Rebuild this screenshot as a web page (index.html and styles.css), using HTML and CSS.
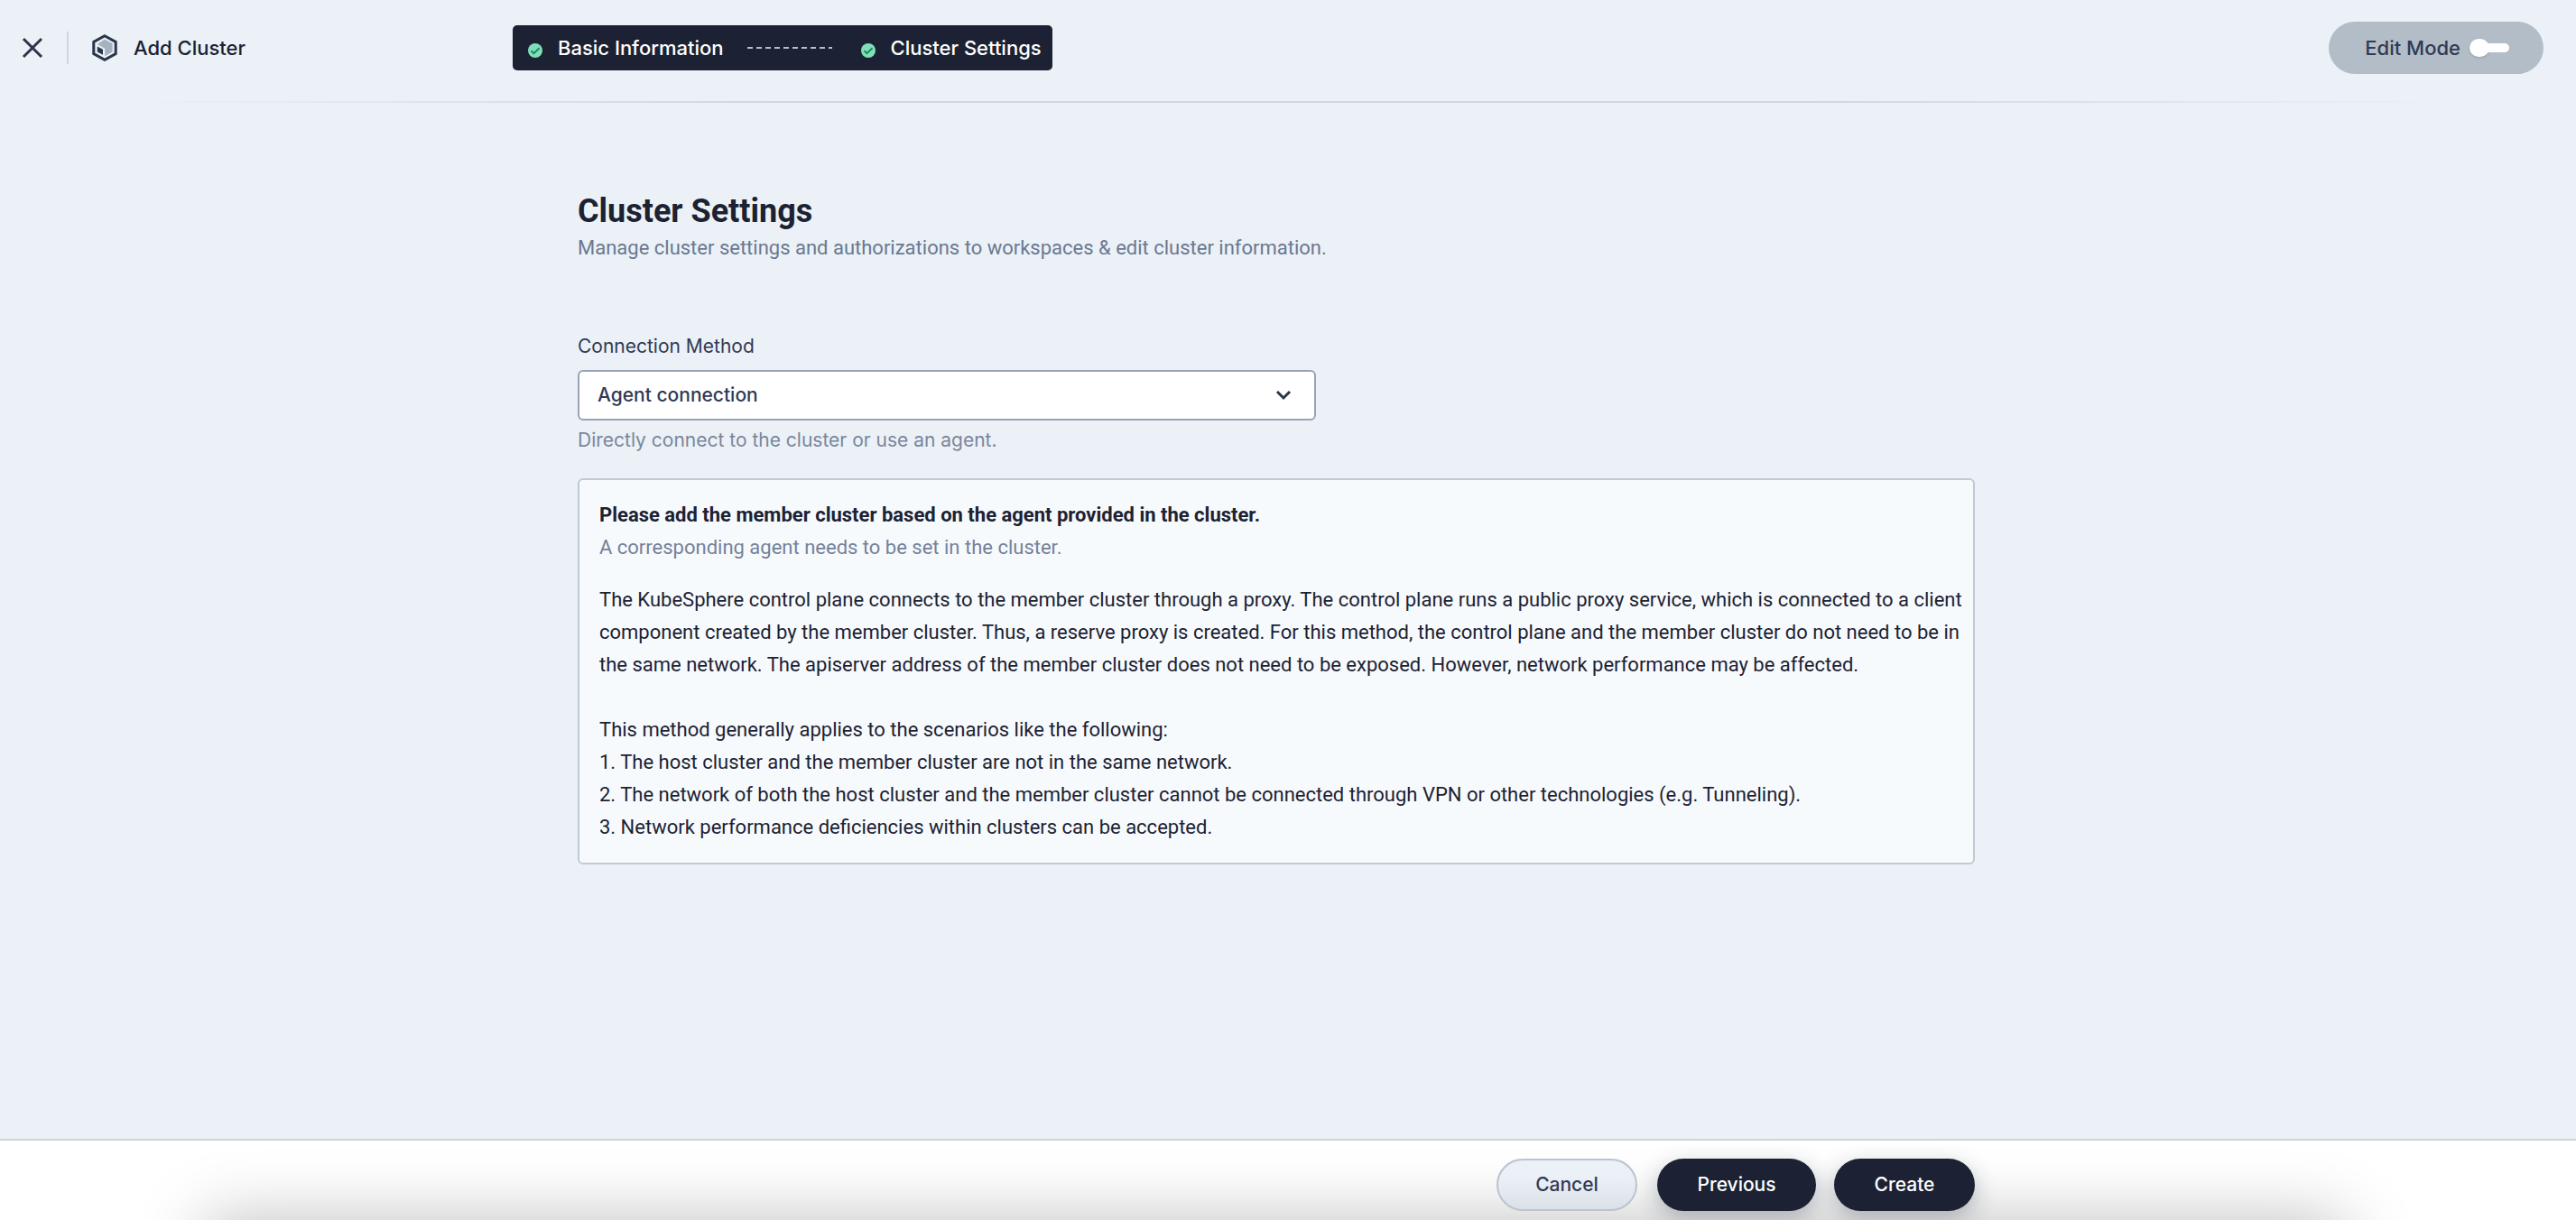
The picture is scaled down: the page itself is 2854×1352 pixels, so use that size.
FILE: index.html
```html
<!DOCTYPE html>
<html lang="en">
<head>
<meta charset="utf-8">
<meta name="viewport" content="width=device-width, initial-scale=1">
<title>Add Cluster</title>
<link rel="stylesheet" href="styles.css">
</head>
<body class="page">
  <header class="header">
    <div class="brand">
      <button class="close" type="button" aria-label="Close">
        <svg width="24" height="24" viewBox="0 0 24 24" fill="none" stroke="#2a3649" stroke-width="3"><path d="M2 2l20 20M22 2L2 22"/></svg>
      </button>
      <span class="divider"></span>
      <svg class="logo" width="28" height="30" viewBox="0 0 28 30">
        <path d="M14 1.700L26.200 8.500v13L14 28.300 1.800 21.500v-13z" fill="none" stroke="#2a3649" stroke-width="3"/>
        <path d="M14 5.600L22.600 10.200v9.400L14.200 24.300v-8.500L5.800 11z" fill="#a5b2c0"/>
        <path d="M5.800 13.600l6.200 3.200v6L5.800 19.400z" fill="#2a3649"/>
      </svg>
      <span class="brand-name">Add Cluster</span>
    </div>
    <nav class="steps" aria-label="Steps">
      <svg class="check" width="16" height="16" viewBox="0 0 16 16"><circle cx="8" cy="8" r="8" fill="#7fdfb8"/><path d="M3.500 8.200l3 3 6-6" fill="none" stroke="#1c8a5e" stroke-width="2"/></svg>
      <span>Basic Information</span>
      <span class="dash"></span>
      <svg class="check" width="16" height="16" viewBox="0 0 16 16"><circle cx="8" cy="8" r="8" fill="#7fdfb8"/><path d="M3.500 8.200l3 3 6-6" fill="none" stroke="#1c8a5e" stroke-width="2"/></svg>
      <span>Cluster Settings</span>
    </nav>
    <label class="mode">Edit Mode
      <input class="toggle" type="checkbox">
    </label>
  </header>

  <main class="main">
    <h1 class="title">Cluster Settings</h1>
    <p class="subtitle">Manage cluster settings and authorizations to workspaces &amp; edit cluster information.</p>

    <div class="field">
      <label class="field-label" for="method">Connection Method</label>
      <div class="select-wrap">
        <select class="select" id="method" aria-describedby="method-help"><option>Agent connection</option></select>
        <svg class="chevron" width="18" height="12" viewBox="0 0 18 12" fill="none" stroke="#2a3649" stroke-width="3"><path d="M2 2l7 7 7-7"/></svg>
      </div>
      <p class="help" id="method-help">Directly connect to the cluster or use an agent.</p>
    </div>

    <section class="notice">
      <h2 class="notice-title">Please add the member cluster based on the agent provided in the cluster.</h2>
      <p class="notice-sub">A corresponding agent needs to be set in the cluster.</p>
      <p class="notice-text">The KubeSphere control plane connects to the member cluster through a proxy. The control plane runs a public proxy service, which is connected to a client component created by the member cluster. Thus, a reserve proxy is created. For this method, the control plane and the member cluster do not need to be in the same network. The apiserver address of the member cluster does not need to be exposed. However, network performance may be affected.</p>
      <p>This method generally applies to the scenarios like the following:</p>
      <ol class="scenarios">
        <li>1. The host cluster and the member cluster are not in the same network.</li>
        <li>2. The network of both the host cluster and the member cluster cannot be connected through VPN or other technologies (e.g. Tunneling).</li>
        <li>3. Network performance deficiencies within clusters can be accepted.</li>
      </ol>
    </section>
  </main>

  <footer class="footer">
    <div class="actions">
      <button class="btn btn-light" type="button">Cancel</button>
      <button class="btn btn-dark btn-wide" type="button">Previous</button>
      <button class="btn btn-dark" type="button">Create</button>
    </div>
  </footer>
</body>
</html>
```
FILE: styles.css
```css
* {
  box-sizing: border-box;
}

.page {
  display: flex;
  flex-direction: column;
  min-height: 100vh;
  margin: 0;
  background: #ebf1f7;
  color: #1c2233;
  font: 400 22px/36px Roboto, "Liberation Sans", sans-serif;
}

p,
h1,
h2,
ol {
  margin: 0;
  padding: 0;
}

/* Header */
.header {
  display: grid;
  grid-template-columns: 544px auto 1fr;
  align-items: center;
  height: 114px;
  padding: 0 36px 8px 24px;
  background: linear-gradient(90deg, transparent 5%, #d0d7e1 30%, #d0d7e1 70%, transparent 95%) bottom / 100% 2px no-repeat;
  font-family: Inter, "Liberation Sans", sans-serif;
  font-weight: 500;
}

.brand {
  display: flex;
  align-items: center;
}

.close {
  display: flex;
  padding: 0;
  border: 0;
  background: none;
}

.divider {
  width: 2px;
  height: 36px;
  margin: 0 26px;
  background: #d0d6e0;
}

.brand-name {
  margin-left: 18px;
}

.steps {
  display: flex;
  align-items: center;
  height: 50px;
  padding: 0 12px 0 17px;
  border-radius: 5px;
  background: #1c2233;
  color: #fff;
}

.check {
  margin: 6px 17px 0 0;
}

.dash {
  width: 94px;
  height: 2px;
  margin: 0 32px 0 26px;
  background: repeating-linear-gradient(90deg, #b6bec9 0 6px, transparent 6px 10px);
}

.mode {
  display: flex;
  align-items: center;
  justify-self: end;
  gap: 10px;
  height: 58px;
  padding: 0 38px 0 40px;
  border-radius: 29px;
  background: #b2bdc7;
  color: #303a55;
}

.toggle {
  display: flex;
  align-items: center;
  width: 44px;
  height: 22px;
  margin: 0;
  appearance: none;
}

.toggle::before {
  content: "";
  width: 22px;
  height: 20px;
  border-radius: 10px;
  background: #fff;
  box-shadow: 0 1px 3px rgba(36, 46, 66, 0.2);
}

.toggle::after {
  content: "";
  flex: 1;
  height: 10px;
  margin-left: -4px;
  border-radius: 0 5px 5px 0;
  background: #fff;
}

/* Form */
.main {
  flex: 1;
  width: 100%;
  max-width: 2188px;
  padding: 98px 0 40px 640px;
}

.title {
  font-size: 36px;
  line-height: 45px;
  font-weight: 700;
}

.subtitle {
  color: #6a7891;
}

.field {
  display: flex;
  flex-direction: column;
  margin-top: 73px;
  font-family: Inter, "Liberation Sans", sans-serif;
  font-size: 21px;
}

.field-label {
  margin-bottom: 8px;
  color: #303a55;
}

.select-wrap {
  position: relative;
  width: 100%;
  max-width: 818px;
}

.select {
  display: block;
  width: 100%;
  height: 56px;
  padding: 0 20px;
  appearance: none;
  border: 2px solid #98a4b4;
  border-radius: 6px;
  background: #fff;
  color: #303a55;
  font: inherit;
  font-weight: 500;
}

.chevron {
  position: absolute;
  top: 22px;
  right: 27px;
  pointer-events: none;
}

.help {
  margin-top: 4px;
  color: #7a869b;
}

.notice {
  margin-top: 24px;
  padding: 21px 8px 21px 22px;
  border: 2px solid #c0c9d5;
  border-radius: 6px;
  background: #f7fafd;
}

.notice-title {
  font-size: 22px;
  font-weight: 700;
}

.notice-sub {
  color: #75819a;
}

.notice-text {
  margin: 22px 0 36px;
}

.scenarios {
  list-style: none;
}

/* Footer */
.footer {
  position: relative;
  height: 90px;
  padding-top: 20px;
  overflow: hidden;
  border-top: 2px solid #ccd4de;
  background: #fff;
}

.footer::after {
  content: "";
  position: absolute;
  top: 100%;
  left: 8%;
  right: 9%;
  height: 200px;
  box-shadow: 0 0 76px rgba(0, 0, 0, 0.26);
}

.actions {
  position: relative;
  z-index: 1;
  display: flex;
  justify-content: flex-end;
  max-width: 2188px;
}

.btn {
  width: 156px;
  height: 58px;
  padding: 0;
  border: 0;
  border-radius: 29px;
  font: 500 21px/36px Inter, "Liberation Sans", sans-serif;
}

.btn-light {
  margin-right: 22px;
  border: 2px solid #bac4d0;
  background: linear-gradient(#ebf1f7 30%, #dce1e8);
  color: #303a55;
}

.btn-dark {
  background: #1c2233;
  color: #fff;
  box-shadow: 0 8px 24px rgba(36, 46, 66, 0.3);
}

.btn-wide {
  width: 176px;
  margin-right: 20px;
}
```
